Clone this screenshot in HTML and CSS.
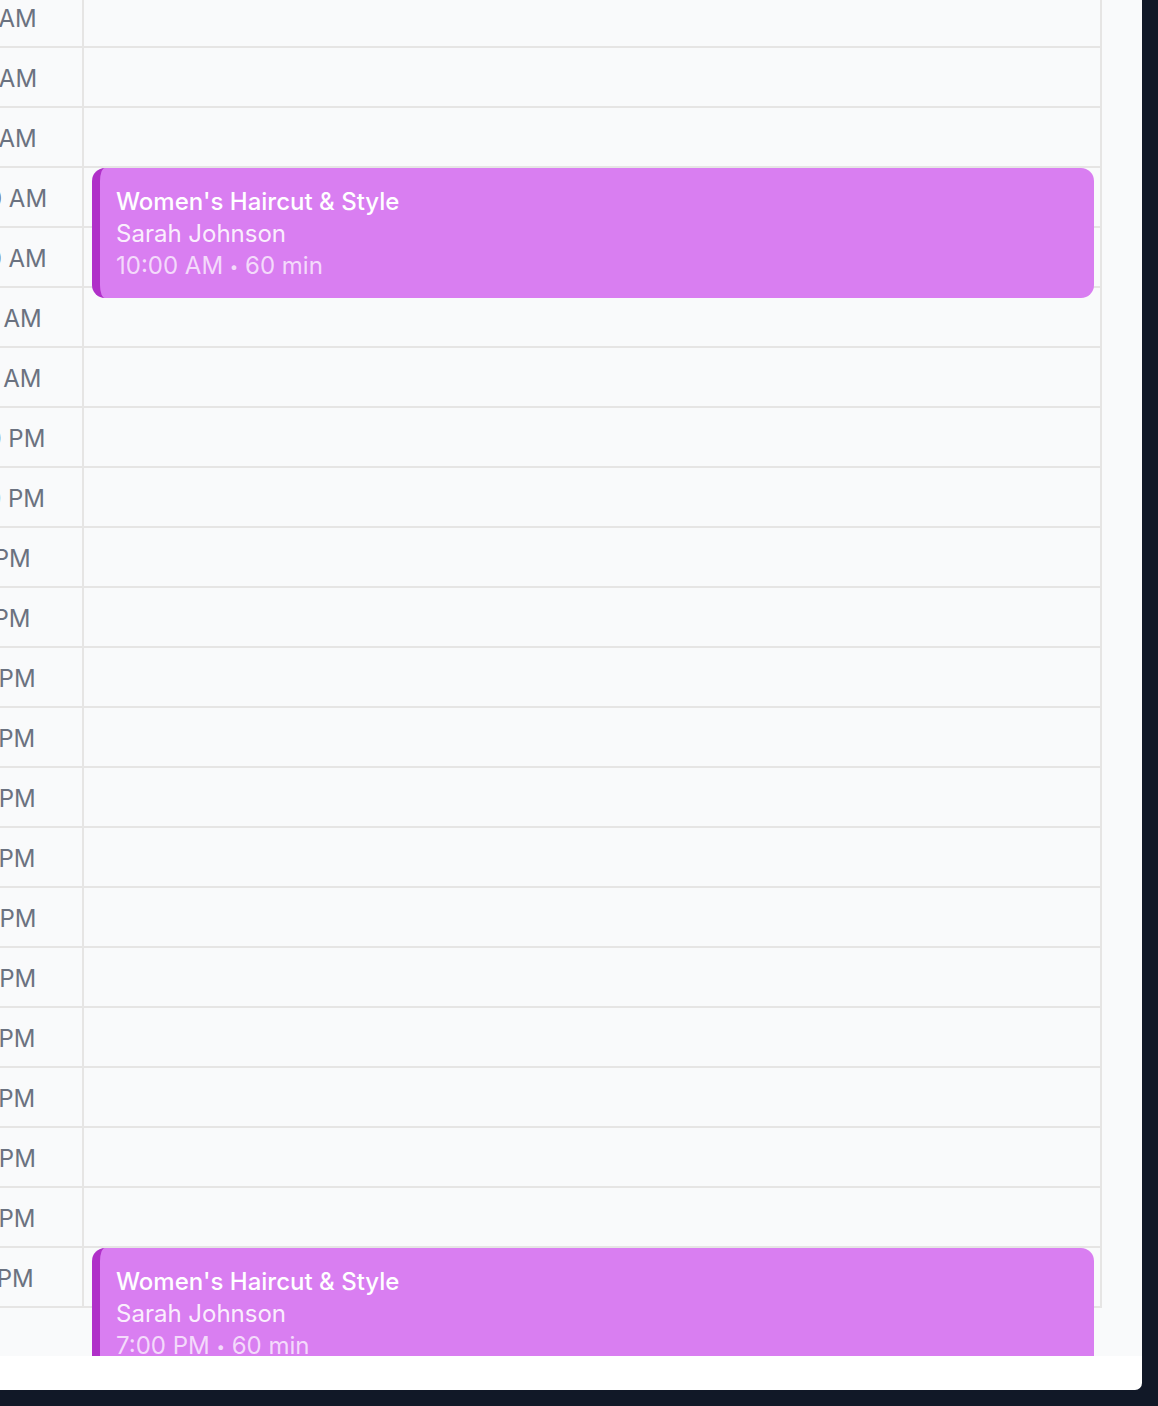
FILE: index.html
```html
<!DOCTYPE html>
<html lang="en">
<head>
<meta charset="utf-8">
<title>Day schedule</title>
<link rel="stylesheet" href="styles.css">
</head>
<body>
<div class="panel">
  <div class="scroller">
    <div class="grid">
      <div class="times">
        <div class="slot">8:30 AM</div>
        <div class="slot">9:00 AM</div>
        <div class="slot">9:30 AM</div>
        <div class="slot">10:00 AM</div>
        <div class="slot">10:30 AM</div>
        <div class="slot">11:00 AM</div>
        <div class="slot">11:30 AM</div>
        <div class="slot">12:00 PM</div>
        <div class="slot">12:30 PM</div>
        <div class="slot">1:00 PM</div>
        <div class="slot">1:30 PM</div>
        <div class="slot">2:00 PM</div>
        <div class="slot">2:30 PM</div>
        <div class="slot">3:00 PM</div>
        <div class="slot">3:30 PM</div>
        <div class="slot">4:00 PM</div>
        <div class="slot">4:30 PM</div>
        <div class="slot">5:00 PM</div>
        <div class="slot">5:30 PM</div>
        <div class="slot">6:00 PM</div>
        <div class="slot">6:30 PM</div>
        <div class="slot">7:00 PM</div>
      </div>
      <div class="day">
        <div class="cell"></div><div class="cell"></div><div class="cell"></div><div class="cell"></div>
        <div class="cell"></div><div class="cell"></div><div class="cell"></div><div class="cell"></div>
        <div class="cell"></div><div class="cell"></div><div class="cell"></div><div class="cell"></div>
        <div class="cell"></div><div class="cell"></div><div class="cell"></div><div class="cell"></div>
        <div class="cell"></div><div class="cell"></div><div class="cell"></div><div class="cell"></div>
        <div class="cell"></div><div class="cell"></div>
        <div class="event" style="top: 180px;">
          <div class="ev-title">Women's Haircut &amp; Style</div>
          <div class="ev-client">Sarah Johnson</div>
          <div class="ev-meta">10:00 AM <span class="dot">•</span> 60 min</div>
        </div>
        <div class="event" style="top: 1260px;">
          <div class="ev-title">Women's Haircut &amp; Style</div>
          <div class="ev-client">Sarah Johnson</div>
          <div class="ev-meta">7:00 PM <span class="dot">•</span> 60 min</div>
        </div>
      </div>
    </div>
  </div>
</div>
</body>
</html>
```
FILE: styles.css
```css
html, body {
  margin: 0;
  padding: 0;
  background: #111827;
  font-family: Inter, "Noto Sans", "DejaVu Sans", sans-serif;
}

.panel {
  width: 1142px;
  height: 1390px;
  background: #ffffff;
  border-bottom-right-radius: 7px;
  padding-bottom: 34px;
  box-sizing: border-box;
  overflow: hidden;
}

.scroller {
  height: 1356px;
  background: #f9fafb;
  overflow: hidden;
}

.grid {
  display: flex;
  margin-left: -61px;
  margin-top: -12px;
}

.times {
  width: 145px;
  flex: none;
  box-sizing: border-box;
  border-right: 2px solid #e6e5e4;
}

.slot {
  height: 60px;
  box-sizing: border-box;
  border-bottom: 2px solid #e6e5e4;
  display: flex;
  align-items: center;
  padding-left: 1px;
  padding-top: 3px;
  font-size: 24px;
  color: #6b7280;
  white-space: nowrap;
}

.day {
  position: relative;
  width: 1018px;
  flex: none;
  box-sizing: border-box;
  border-right: 2px solid #e6e5e4;
}

.cell {
  height: 60px;
  box-sizing: border-box;
  border-bottom: 2px solid #e6e5e4;
}

.event {
  position: absolute;
  left: 8px;
  right: 6px;
  box-sizing: border-box;
  padding: 18px 16px 15px 16px;
  background: #d97ef1;
  border-left: 8px solid #b030c9;
  border-radius: 13px;
  color: #ffffff;
  font-size: 24px;
  line-height: 32px;
}

.ev-title {
  font-weight: 500;
}

.ev-client {
  color: rgba(255, 255, 255, 0.9);
}

.ev-meta {
  color: rgba(255, 255, 255, 0.72);
}

.dot {
  font-size: 15px;
  vertical-align: 2px;
}
```
